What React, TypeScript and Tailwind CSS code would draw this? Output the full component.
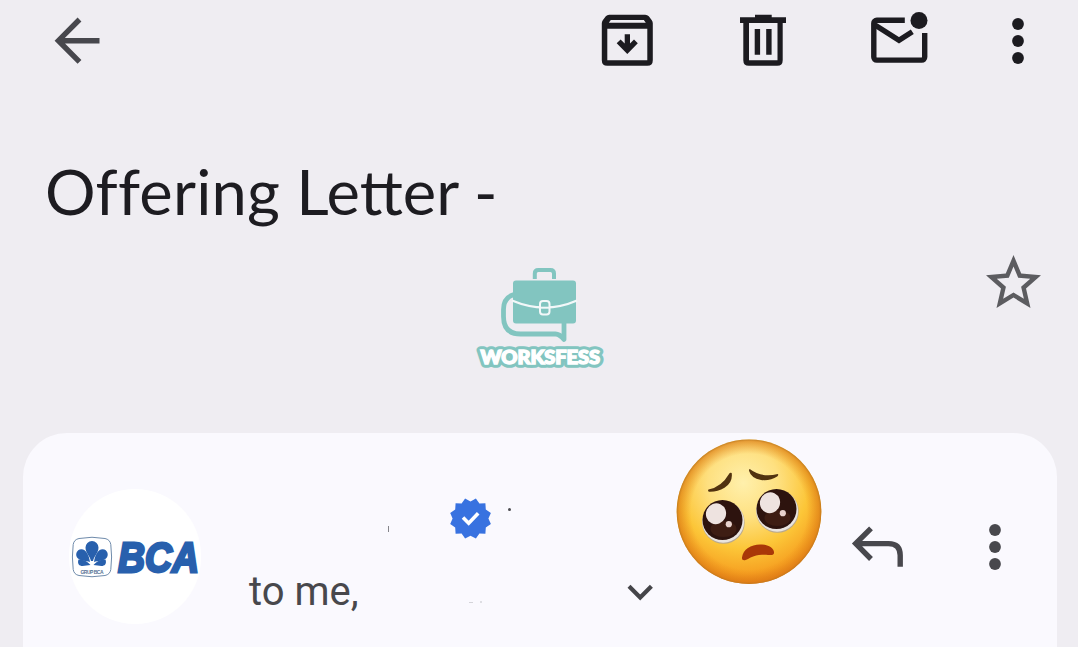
function BackIcon() {
  return (
    <svg viewBox="54 17 47 47" className="h-[47px] w-[47px]" fill="none" stroke="#47474d" strokeWidth="5.4">
      <path d="M99.5 40.7H59M79.5 19.5 58.4 40.7l21.1 21.2" />
    </svg>
  );
}

function ArchiveIcon() {
  return (
    <svg viewBox="601 14 52 52" className="h-[52px] w-[52px]" fill="#1c1b20">
      <path
        fillRule="evenodd"
        d="M609.2 14.7h36q2.2 0 3.6 1.6l3 4q1 1.3 1 3v36.9q0 5.5-5.5 5.5h-40q-5.5 0-5.5-5.5v-36.9q0-1.7 1-3l3-4q1.3-1.6 3.4-1.6ZM610.8 20l-2 2.8h37l-2-2.8ZM607.3 28.7v31.5h40v-31.5Z"
      />
      <path d="M624.7 34.3h5.3v9.2l4-3.9 3.8 3.7-10.5 10.8-10.6-10.8 3.9-3.7 4.1 3.9Z" />
    </svg>
  );
}

function TrashIcon() {
  return (
    <svg viewBox="740 14 46 52" className="h-[52px] w-[46px]" fill="#1c1b20">
      <path d="M740 17.3h15v-2.6h16.7v2.6H786V23h-46Z" />
      <path fillRule="evenodd" d="M743.3 20h39.4v40.2q0 5.5-5.5 5.5h-28.4q-5.5 0-5.5-5.5ZM749 23v37.2h28.5V23Z" />
      <path d="M754.7 29h5.4v25.7h-5.4ZM766.2 29h5.4v25.7h-5.4Z" />
    </svg>
  );
}

function UnreadIcon() {
  return (
    <svg viewBox="870 11 59 53" className="h-[53px] w-[59px]" fill="none" stroke="#1c1b20" strokeWidth="5.4">
      <path d="M904.8 20.2h-28a3 3 0 0 0-3 3v33.9a3 3 0 0 0 3 3h44.9a3 3 0 0 0 3-3V33" />
      <path d="m875 25 24 15.2 13.3-8.5" />
      <circle cx="919" cy="20.5" r="8.5" fill="#1c1b20" stroke="none" />
    </svg>
  );
}

function MoreIcon({ color }: { color: string }) {
  return (
    <svg viewBox="0 0 12 46" className="h-[46px] w-3" fill={color}>
      <circle cx="6" cy="6" r="5.9" />
      <circle cx="6" cy="23" r="5.9" />
      <circle cx="6" cy="40" r="5.9" />
    </svg>
  );
}

function StarIcon() {
  return (
    <svg viewBox="2 2 20 19" preserveAspectRatio="none" className="h-[53px] w-[55px]" fill="#5c5c60">
      <path d="M22 9.24l-7.19-.62L12 2 9.19 8.63 2 9.24l5.46 4.73L5.82 21 12 17.27 18.18 21l-1.63-7.03L22 9.24zM12 15.4l-3.76 2.27 1-4.28-3.32-2.88 4.38-.38L12 6.1l1.71 4.04 4.38.38-3.32 2.88 1 4.28L12 15.4z" />
    </svg>
  );
}

function WorksfessLogo() {
  return (
    <svg viewBox="470 262 140 112" className="h-[112px] w-[140px]">
      <path d="M534.8 279v-5.5q0-3.5 3.5-3.5h12.2q3.5 0 3.5 3.5v5.5" fill="none" stroke="#82c5c0" strokeWidth="4" />
      <path
        d="M514 294.5q-10.5 3-10.5 15v7q0 17.5 17 17.5h35q4 0 8.5 5.5V322"
        fill="none"
        stroke="#82c5c0"
        strokeWidth="4.8"
        strokeLinejoin="round"
      />
      <rect x="513" y="280.5" width="63" height="43" rx="3" fill="#82c5c0" />
      <path d="M512 300.5q33 14 65 0" fill="none" stroke="#f3f8f9" strokeWidth="2.4" />
      <rect x="540" y="301" width="9.5" height="13.5" rx="3" fill="#82c5c0" stroke="#f3f8f9" strokeWidth="2" />
      <path d="M540 307.7h9.5" stroke="#f3f8f9" strokeWidth="2" />
      <text
        x="480.5"
        y="363.5"
        textLength="119.5"
        lengthAdjust="spacingAndGlyphs"
        className="font-['Lato',sans-serif] text-[18px] font-black"
        fill="#82c5c0"
        stroke="#82c5c0"
        strokeWidth="7.5"
        strokeLinejoin="round"
      >
        WORKSFESS
      </text>
      <text
        x="480.5"
        y="363.5"
        textLength="119.5"
        lengthAdjust="spacingAndGlyphs"
        aria-hidden="true"
        className="font-['Lato',sans-serif] text-[18px] font-black"
        fill="#fff"
        stroke="#fff"
        strokeWidth="1.4"
      >
        WORKSFESS
      </text>
    </svg>
  );
}

function BcaLogo() {
  return (
    <svg viewBox="69 525 144 64" className="h-[64px] w-[144px] shrink-0">
      <path
        d="M79 538.5q13-2.5 26 0 5 1 5.8 6 1.6 12.5 0 25-.8 5-5.8 6-13 2.5-26 0-5-1-5.8-6-1.6-12.5 0-25 .8-5 5.8-6Z"
        fill="#fff"
        stroke="#6f8bab"
        strokeWidth="1"
      />
      <g fill="#2860ad">
        <path d="M91 561c-1-5-5.5-8-5.5-13.5a6.5 6.5 0 0 1 13 0c0 5.5-4.5 8.5-5.5 13.5Z" />
        <path d="M90 562c-1-7-4-12.5-8.5-12.7-5-.2-7 6.2-3.5 9.2 3 2.5 8 2 12 3.5Z" />
        <path d="M94 562c1-7 4-12.5 8.5-12.7 5-.2 7 6.2 3.5 9.2-3 2.5-8 2-12 3.5Z" />
        <path d="M90.5 565c-4-4.5-8-5.5-12-5.5-1.5 4.5 1 6.5 4 6.5ZM93.5 565c4-4.5 8-5.5 12-5.5 1.5 4.5-1 6.5-4 6.5Z" />
      </g>
      <text x="80.5" y="573.5" textLength="23" className="font-['Liberation_Sans',sans-serif] text-[5px] font-bold" fill="#557394">
        GRUP BCA
      </text>
      <text
        x="118"
        y="571.5"
        textLength="81"
        lengthAdjust="spacingAndGlyphs"
        className="font-['Liberation_Sans',sans-serif] text-[42px] font-bold italic"
        fill="#2860ad"
        stroke="#2860ad"
        strokeWidth="2.8"
      >
        BCA
      </text>
    </svg>
  );
}

function VerifiedIcon() {
  return (
    <svg viewBox="450 498 41 41" className="h-[41px] w-[41px]">
      <path
        d="m470.5 501.500 5.400-3 3.500 5 6-.2.4 6.200 5.100 3.500L488.400 518.500l2.500 5.500-5.100 3.500-.4 6.200-6-.2-3.500 5-5.400-2.800-5.400 2.800-3.500-5-6 .2-.4-6.200-5-3.500 2.400-5.500-2.400-5.500 5-3.500.4-6.200 6 .2 3.500-5Z"
        fill="#3872e0"
      />
      <path d="m463 517.5 5.700 5.700 9.500-9.900" fill="none" stroke="#fff" strokeWidth="3.6" />
    </svg>
  );
}

function ReplyIcon() {
  return (
    <svg viewBox="851 526 53 42" className="h-[42px] w-[53px]" fill="none" stroke="#48484d" strokeWidth="5.4">
      <path d="M871 528.3 855.7 543.6 871 559M856 543.6h32.5q11.7 0 11.7 11.7v11.5" />
    </svg>
  );
}

function ChevronIcon() {
  return (
    <svg viewBox="626 584 28 18" className="h-[18px] w-7" fill="none" stroke="#454549" strokeWidth="4.2">
      <path d="m628 587.2 11.2 11.3 11.2-11.3" />
    </svg>
  );
}

function Eye({ cx, cy }: { cx: number; cy: number }) {
  return (
    <g transform={`translate(${cx} ${cy})`}>
      <circle cx="1" cy="2.6" r="21.2" fill="#b9a98e" />
      <circle cx=".7" cy="1.8" r="20.9" fill="#e9e4df" />
      <circle r="20" fill="#2d130e" />
      <ellipse cx="1" cy="9" rx="13" ry="8" fill="#4a2418" opacity=".6" />
      <ellipse cx="-6.5" cy="-6.3" rx="10" ry="10.5" fill="#eee3e0" transform="rotate(25 -6.5 -6.3)" />
      <circle cx="6.3" cy="4.2" r="3.1" fill="#e8d2cd" />
    </g>
  );
}

function PleadingFace() {
  return (
    <svg viewBox="676 438 146 147" className="h-[147px] w-[146px]">
      <defs>
        <radialGradient id="face" cx=".46" cy=".3" r=".7">
          <stop offset="0" stopColor="#fff0ac" />
          <stop offset=".35" stopColor="#fee080" />
          <stop offset=".65" stopColor="#fcc638" />
          <stop offset=".9" stopColor="#f6a021" />
          <stop offset="1" stopColor="#ec8619" />
        </radialGradient>
        <radialGradient id="rim" cx=".5" cy=".5" r=".5">
          <stop offset=".8" stopColor="#e58317" stopOpacity="0" />
          <stop offset=".97" stopColor="#d97814" stopOpacity=".6" />
          <stop offset="1" stopColor="#bd761d" stopOpacity=".9" />
        </radialGradient>
      </defs>
      <circle cx="749" cy="511.7" r="72.3" fill="url(#face)" />
      <circle cx="749" cy="511.7" r="72.3" fill="url(#rim)" />
      <path
        d="M708.5 489.5q13-2.5 20.5-15.500 1-2 2.700-1 1.300 9.500-7.200 14.700-7 4.300-15.500 4-1.600-.7-.5-2.200ZM749.7 469q12.300 9.300 28 5 1.300.8-.2 2.200-7.500 5-16.500 3.800-10-2-12-9.300 0-1.300.7-1.700Z"
        fill="#51320f"
      />
      <Eye cx={722.5} cy={520} />
      <Eye cx={776.5} cy={509} />
      <path
        d="M742 557.5c1-8 9-13 18-13 9.500 0 14.500 4.500 14 8.500-.5 3.500-5 1.200-12 1.700-9 .6-12.500 3.800-16.500 5.300-2.500.7-3.700-.5-3.500-2.500Z"
        fill="#a93708"
      />
    </svg>
  );
}

export default function App() {
  return (
    <div className="flex h-[647px] w-[1078px] flex-col overflow-hidden bg-[#efedf2]">
      <header className="flex h-20 shrink-0 items-center justify-between px-[54px]">
        <button aria-label="Back">
          <BackIcon />
        </button>
        <div className="flex items-center">
          <button aria-label="Archive" className="mr-[87px]">
            <ArchiveIcon />
          </button>
          <button aria-label="Delete" className="mr-[84px]">
            <TrashIcon />
          </button>
          <button aria-label="Mark unread" className="-mt-[5px] mr-[83px]">
            <UnreadIcon />
          </button>
          <button aria-label="More" className="mt-[2px]">
            <MoreIcon color="#1c1b20" />
          </button>
        </div>
      </header>

      <section className="h-[353px] shrink-0 pt-[72px]">
        <h1 className="ml-[45px] w-[480px] origin-left scale-x-[1.037] font-['Lato',sans-serif] text-[61px] leading-[80px] whitespace-nowrap text-[#1d1c21]">
          <span className="tracking-[0.2px]">Offering</span> <span>Letter</span> <span>-</span>
        </h1>
        <div className="flex items-start justify-between pt-[23px] pr-[37px] pl-[470px]">
          <div className="pt-[7px]">
            <WorksfessLogo />
          </div>
          <button aria-label="Star">
            <StarIcon />
          </button>
        </div>
      </section>

      <main className="relative ml-[23px] flex h-[214px] w-[1034px] rounded-t-[44px] bg-[#faf9fe] pl-[46px]">
        <div className="mt-[56px] flex h-[135px] w-[132px] shrink-0 items-center rounded-full bg-white">
          <BcaLogo />
        </div>
        <div className="ml-12 w-[406px] pt-[65px]">
          <div className="flex items-start pl-[201px]">
            <VerifiedIcon />
            <span className="mt-[10px] ml-[17px] h-[3px] w-[3px] rounded-full bg-[#4b4b50]" />
          </div>
          <div className="mt-[29px] flex items-center justify-between">
            <span className="font-['Roboto',sans-serif] text-[40px] leading-[48px] text-[#48484c]">to me,</span>
            <ChevronIcon />
          </div>
        </div>
        <button aria-label="Reply" className="mt-[93px] ml-[196px] h-[42px]">
          <ReplyIcon />
        </button>
        <button aria-label="More" className="mt-[91px] ml-[85px] h-[46px]">
          <MoreIcon color="#48484d" />
        </button>
        <div className="absolute top-[5px] left-[653px]">
          <PleadingFace />
        </div>
        <span className="absolute top-[93px] left-[365px] h-[6px] w-px bg-[#85858a]" />
        <span className="absolute top-[169px] left-[446px] h-px w-[4px] bg-[#d4d4d9]" />
        <span className="absolute top-[168px] left-[457px] h-[2px] w-[2px] bg-[#dedee3]" />
      </main>
    </div>
  );
}
